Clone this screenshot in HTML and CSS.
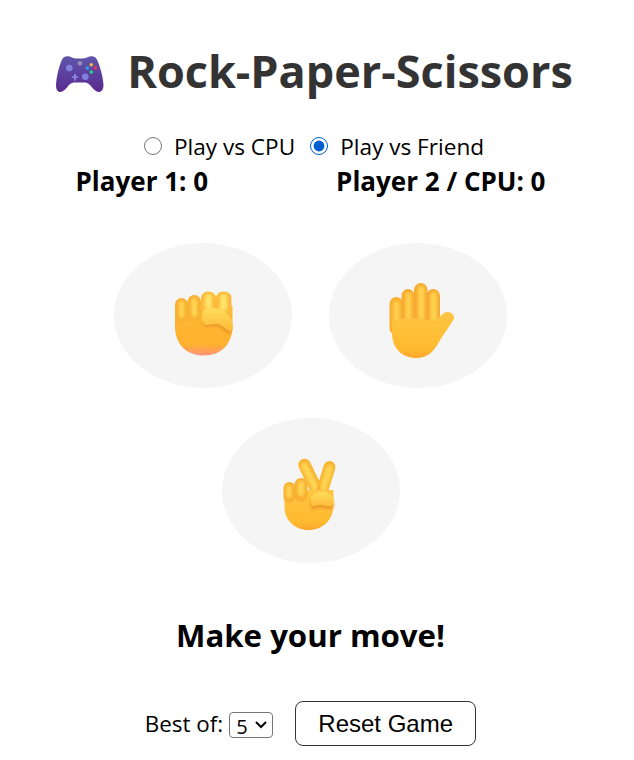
FILE: index.html
```html
<!DOCTYPE html>
<html lang="en">
  <head>
    <meta charset="UTF-8" />
    <meta name="viewport" content="width=device-width, initial-scale=1.0" />
    <title>Rock-Paper-Scissors</title>
    <link rel="stylesheet" href="styles.css">
  </head>
  <body>
    <div class="game">
      <h1 class="title">
        <svg class="pad-icon" viewBox="55 57 50 38" aria-hidden="true">
          <defs>
            <linearGradient id="padFill" x1="0" y1="0" x2="0" y2="1">
              <stop offset="0" stop-color="#5f55ab" />
              <stop offset="1" stop-color="#5b2a8f" />
            </linearGradient>
            <linearGradient id="skin" gradientUnits="userSpaceOnUse" x1="0" y1="305" x2="0" y2="356">
              <stop offset="0" stop-color="#fdb936" />
              <stop offset="0.780" stop-color="#ffb02e" />
              <stop offset="1" stop-color="#ff9180" />
            </linearGradient>
            <linearGradient id="thumb" x1="0" y1="0" x2="0" y2="1">
              <stop offset="0" stop-color="#ffdc5c" />
              <stop offset="1" stop-color="#fdbb38" />
            </linearGradient>
            <linearGradient id="palm" x1="0" y1="0" x2="0" y2="1">
              <stop offset="0" stop-color="#ffc543" />
              <stop offset="0.800" stop-color="#ffba2f" />
              <stop offset="1" stop-color="#fda52c" />
            </linearGradient>
            <filter id="soft" x="-50%" y="-50%" width="200%" height="200%">
              <feGaussianBlur stdDeviation="1.400" />
            </filter>
          </defs>
          <path fill="url(#padFill)" d="M63 60C65 58 69 58 71 59C73 60 75 60.500 79 60.500C84 60.500 86 60 88 59C90 58 94 58 96 60C99 64 103 78 103.500 87C103.500 92 101 94 99 94C96 94 93 91 90 87C88 85 86 84.500 84 84.500H75C73 84.500 71 85 69 87C66 91 63 94 60 94C58 94 56 92 56 87C56.500 78 60 64 63 60Z" />
          <circle cx="69.300" cy="70" r="3.300" fill="#7f80de" />
          <circle cx="85.300" cy="78.700" r="3.300" fill="#7f80de" />
          <circle cx="80" cy="65.300" r="2.300" fill="#9790b5" />
          <path fill="#8583e4" d="M74 76H76V78.300H78.300V80H76V82.500H74V80H71.700V78.300H74Z" />
          <circle cx="91.300" cy="66.700" r="1.800" fill="#f7bd3d" />
          <circle cx="95.300" cy="70" r="1.800" fill="#f0305c" />
          <circle cx="91.300" cy="74" r="1.800" fill="#25d98e" />
          <circle cx="87.300" cy="70" r="1.800" fill="#2aa4f4" />
        </svg>
        <span>Rock-Paper-Scissors</span>
      </h1>

      <div class="modes">
        <label class="mode"><input type="radio" name="mode" value="cpu" /> Play vs CPU</label>
        <label class="mode"><input type="radio" name="mode" value="friend" checked /> Play vs Friend</label>
      </div>

      <div class="scores">
        <span>Player 1: 0</span>
        <span>Player 2 / CPU: 0</span>
      </div>

      <div class="choices">
        <button class="choice" aria-label="Rock">
          <svg viewBox="114 243 178 145" aria-hidden="true">
            <path fill="url(#skin)" d="M175 310V326C175 345 187 355.500 204 355.500C221 355.500 232.500 344 232.500 326V306Z" />
            <rect x="175" y="298" width="13" height="25" rx="6.500" fill="#f8b031" />
            <rect x="179" y="301" width="5" height="17" rx="2.500" fill="#ffd654" filter="url(#soft)" />
            <rect x="187.500" y="295" width="13.500" height="27" rx="6.700" fill="#f8b031" />
            <rect x="191.500" y="298" width="5.500" height="19" rx="2.700" fill="#ffd654" filter="url(#soft)" />
            <rect x="201" y="291.500" width="15" height="25" rx="7" fill="#fbbb3a" />
            <rect x="205" y="294" width="7" height="15" rx="3.500" fill="#ffe36a" filter="url(#soft)" />
            <rect x="216" y="291.500" width="15.500" height="27" rx="7" fill="#fbbb3a" />
            <rect x="220" y="294" width="7" height="17" rx="3.500" fill="#ffe36a" filter="url(#soft)" />
            <path fill="#ea9a25" filter="url(#soft)" d="M203 321C204 315 209 313 215 314C224 315 231 322 231 333C228 335 225 331 221 328C217 325 212 326 207 327C204 327 203 324 203 321Z" />
            <path fill="url(#thumb)" d="M202 315C202 309 208 307 214 308C225 309 233 317 233 329C230 333 226 329 222 326C218 323 213 324 207 325C204 325 201 320 202 315Z" />
          </svg>
        </button>
        <button class="choice" aria-label="Paper">
          <svg viewBox="329 243 178 145" aria-hidden="true">
            <rect x="389.500" y="297" width="13.500" height="38" rx="6.700" fill="#f8b032" />
            <rect x="393.500" y="301" width="6" height="26" rx="3" fill="#ffd24e" filter="url(#soft)" />
            <rect x="401.500" y="289" width="13" height="42" rx="6.500" fill="#f6ab30" />
            <rect x="405.500" y="292" width="6" height="30" rx="3" fill="#ffd24e" filter="url(#soft)" />
            <rect x="414" y="283" width="13.500" height="46" rx="6.700" fill="#f6ab30" />
            <rect x="418" y="286" width="6.500" height="34" rx="3" fill="#ffd24e" filter="url(#soft)" />
            <rect x="426.500" y="289" width="13.500" height="42" rx="6.700" fill="#f6ab30" />
            <rect x="430.500" y="292" width="6.500" height="30" rx="3" fill="#ffd24e" filter="url(#soft)" />
            <path fill="url(#palm)" d="M392 322V333C392 349 403 358 416 358C428 358 434 351 439 342C443 335 449 327 454 319C455 314 449 310 444 313C440 316 436 320 434 323C428 318 402 316 392 322Z" />
          </svg>
        </button>
        <button class="choice" aria-label="Scissors">
          <svg viewBox="222 418 177 145" aria-hidden="true">
            <line x1="304" y1="465" x2="318" y2="494" stroke="#f9b634" stroke-width="12.500" stroke-linecap="round" />
            <line x1="304" y1="466" x2="315" y2="488" stroke="#ffd654" stroke-width="6" stroke-linecap="round" filter="url(#soft)" />
            <line x1="329" y1="467" x2="320" y2="496" stroke="#f9b634" stroke-width="12" stroke-linecap="round" />
            <line x1="329" y1="468" x2="323" y2="488" stroke="#ffd654" stroke-width="6" stroke-linecap="round" filter="url(#soft)" />
            <path fill="url(#palm)" d="M284 492V507C284 521 295 530 308 530C323 530 333 519 333 505V490L322 490H296Z" />
            <rect x="283" y="482" width="12" height="21" rx="6" fill="#f8b032" />
            <rect x="286" y="485" width="5" height="13" rx="2.500" fill="#ffd654" filter="url(#soft)" />
            <rect x="294" y="478" width="13" height="24" rx="6.500" fill="#f8b032" />
            <rect x="297.500" y="481" width="6" height="15" rx="3" fill="#ffd654" filter="url(#soft)" />
            <path fill="#ea9a25" filter="url(#soft)" d="M310 502C311 496 319 494 324 495C330 496 333 500 333 506C332 511 326 509 322 508C318 507 313 511 311 508C310 506 310 504 310 502Z" />
            <path fill="url(#thumb)" d="M310 499C311 493 319 491 324 492C330 493 333 497 333 503C332 508 326 506 322 505C318 504 313 508 311 505C310 503 310 501 310 499Z" />
          </svg>
        </button>
      </div>

      <h2 class="status">Make your move!</h2>

      <div class="controls">
        <label class="best-of">Best of:
          <select class="rounds">
            <option>3</option>
            <option selected>5</option>
            <option>7</option>
          </select>
        </label>
        <button class="reset">Reset Game</button>
      </div>
    </div>
  </body>
</html>
```

FILE: styles.css
```css
body {
  margin: 0;
  background: #fff;
  color: #000;
  font-family: "Open Sans", "Noto Sans", sans-serif;
}

.game {
  width: 621px;
  display: flex;
  flex-direction: column;
  align-items: center;
  padding-top: 33px;
}

.title {
  display: flex;
  align-items: center;
  gap: 22px;
  margin: 0 0 0 8px;
  font-size: 45px;
  line-height: 76px;
  font-weight: 700;
  color: #333;
  white-space: nowrap;
}

.pad-icon {
  width: 50px;
  height: 38px;
  margin: 6px 0 0 -1px;
}

.modes {
  display: flex;
  gap: 15px;
  margin: 22px 0 0 7px;
  font-size: 22.6px;
  line-height: 32px;
}

.mode {
  display: flex;
  align-items: center;
  gap: 12px;
}

.mode input {
  width: 18px;
  height: 18px;
  margin: 0 0 3px;
  accent-color: #005fcc;
}

.scores {
  display: flex;
  gap: 128px;
  font-size: 26px;
  font-weight: 700;
  line-height: 36px;
}

.choices {
  width: 420px;
  display: flex;
  flex-wrap: wrap;
  justify-content: center;
  gap: 30px 37px;
  margin-top: 44px;
}

.choice {
  width: 178px;
  height: 145px;
  padding: 0;
  border: none;
  border-radius: 50%;
  background: #f5f5f5;
  cursor: pointer;
}

.choice svg {
  display: block;
  width: 100%;
  height: 100%;
}

.status {
  margin: 49px 0 0;
  font-size: 31.2px;
  font-weight: 700;
  line-height: 46px;
}

.controls {
  display: flex;
  align-items: center;
  gap: 22px;
  margin-top: 43px;
}

.best-of {
  display: flex;
  align-items: center;
  gap: 6px;
  font-size: 22.4px;
  line-height: 28px;
}

.rounds {
  width: 44px;
  height: 26px;
  margin-top: 2px;
  padding: 0 0 0 6px;
  appearance: none;
  font-family: "Open Sans", sans-serif;
  font-size: 20px;
  background: #fff url("data:image/svg+xml,%3Csvg xmlns='http://www.w3.org/2000/svg' width='14' height='10'%3E%3Cpath d='M2 2l5 5 5-5' fill='none' stroke='%23000' stroke-width='2'/%3E%3C/svg%3E") no-repeat right 4px center;
  border: 1px solid #767676;
  border-radius: 4px;
}

.reset {
  width: 181px;
  height: 45px;
  padding: 0;
  background: #fff;
  border: 1px solid #333;
  border-radius: 8px;
  font-family: "Liberation Sans", Arial, sans-serif;
  font-size: 24px;
  cursor: pointer;
}
```
